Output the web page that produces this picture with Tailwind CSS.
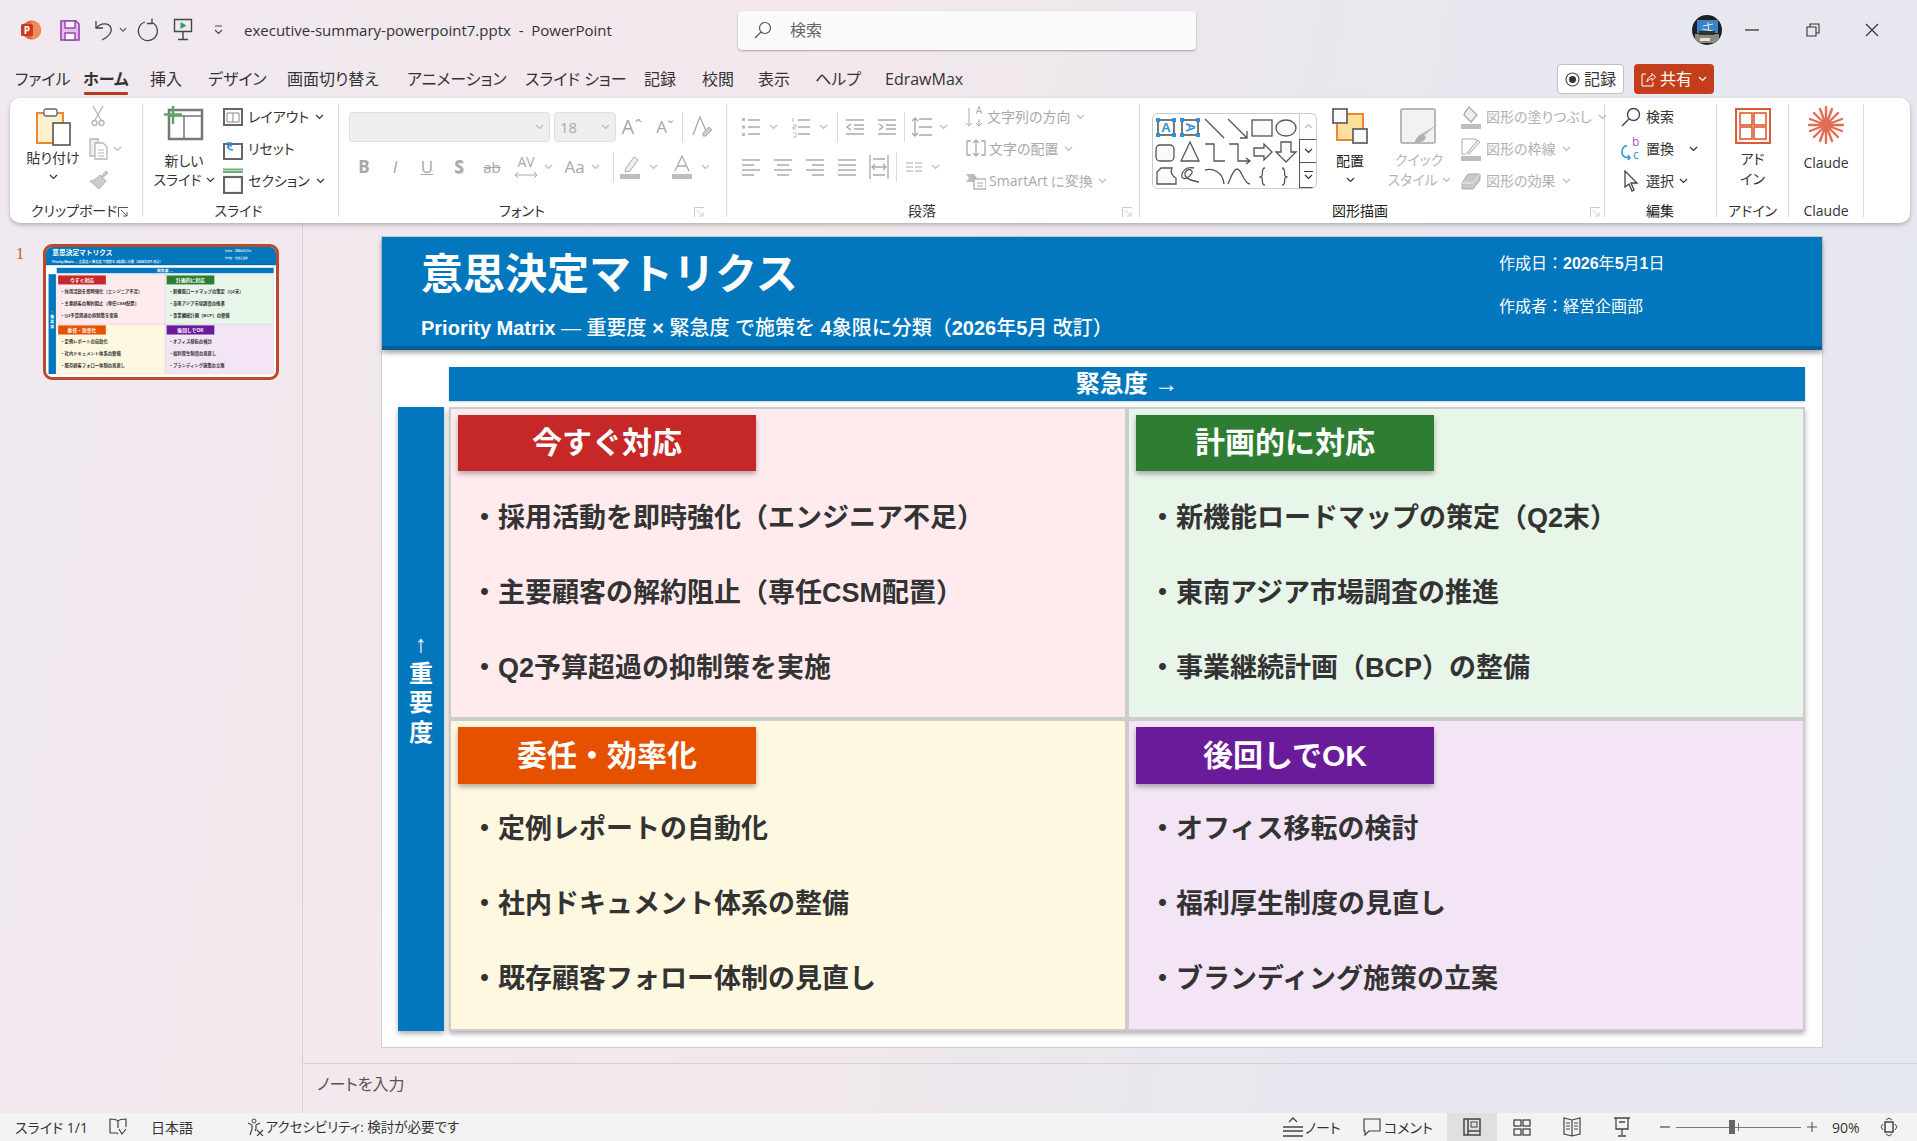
<!DOCTYPE html>
<html lang="ja">
<head>
<meta charset="utf-8">
<title>PowerPoint</title>
<script src="https://cdn.jsdelivr.net/npm/@tailwindcss/browser@4"></script>
</head>
<body class="m-0 overflow-hidden">
<svg class="hidden" aria-hidden="true">
<symbol id="chev" viewBox="0 0 9 6"><path d="M1 1l3.5 3.5L8 1" fill="none" stroke="currentColor" stroke-width="1.2"/></symbol>
<symbol id="launch" viewBox="0 0 11 11"><path d="M.5 10V.5H10M3 3l6 6M9 5v4H5" fill="none" stroke="currentColor"/></symbol>
</svg>
<div class="w-[1917px] h-[1141px] flex flex-col overflow-hidden text-[#333] font-['Open_Sans','Noto_Sans_CJK_JP',sans-serif] [font-feature-settings:'palt'] bg-[linear-gradient(100deg,#f0e9f0_0%,#f3e8ec_40%,#ece7ec_55%,#e7e8ef_70%,#e6e8ef_100%)]">

<!-- title bar -->
<header class="h-[60px] shrink-0 flex items-center">
  <div class="w-[70px] pl-[20px] shrink-0">
    <svg class="w-[21px] h-[22px]" viewBox="0 0 21 22"><circle cx="11.5" cy="11" r="9.5" fill="#e8623c"/><path d="M11.5 1.5a9.5 9.5 0 0 1 0 19z" fill="#f08a5d"/><rect x="1" y="5" width="12" height="12" rx="1.5" fill="#c43e1c"/><text x="7" y="15" font-size="10" font-weight="700" fill="#fff" text-anchor="middle" font-family="Open Sans">P</text></svg>
  </div>
  <svg class="w-[20px] h-[21px] shrink-0 ml-[-10px] mr-[14px]" viewBox="0 0 20 21"><path d="M1 1h15l3 3v16H1z" fill="#e4bdea" stroke="#9a3fb0" stroke-width="1.6"/><path d="M5 1h10v7H5zM5 13h10v7H5z" fill="#fff" stroke="#9a3fb0" stroke-width="1.4"/></svg>
  <svg class="w-[20px] h-[22px] shrink-0" viewBox="0 0 20 22"><path d="M2 2v7h7M2.500 9C6 4 15 3 17 9c1.500 5-3 9-9 12" fill="none" stroke="#444" stroke-width="1.3"/></svg>
  <svg class="w-[8px] h-[6px] ml-[5px] text-[#444] shrink-0"><use href="#chev"/></svg>
  <svg class="w-[22px] h-[24px] ml-[10px] shrink-0" viewBox="0 0 22 24"><path d="M8 4A9.500 9.500 0 1 0 15 4.500M15 .5v5h-5" fill="none" stroke="#444" stroke-width="1.300"/></svg>
  <svg class="w-[20px] h-[24px] ml-[14px] shrink-0" viewBox="0 0 20 24"><path d="M1.500 1.500h17v12h-17zM10 14v7M5 21.500h10" fill="none" stroke="#444" stroke-width="1.400"/><path d="M7.500 4l6 3.500-6 3.500z" fill="#2f9e6a"/></svg>
  <svg class="w-[11px] h-[11px] ml-[20px] shrink-0" viewBox="0 0 11 11"><path d="M2 1h7M2 5l3.500 3.500L9 5" fill="none" stroke="#444" stroke-width="1.100"/></svg>
  <div class="ml-[20px] text-[15px] whitespace-pre w-[488px] shrink-0">executive-summary-powerpoint7.pptx  -  PowerPoint</div>
  <div class="ml-[6px] w-[458px] h-[39px] shrink-0 bg-[#fafafa] rounded-[4px] shadow-[0_1px_2px_rgba(0,0,0,0.3)] flex items-center">
    <svg class="w-[18px] h-[18px] ml-[16px]" viewBox="0 0 18 18"><circle cx="11" cy="7" r="5.500" fill="none" stroke="#555" stroke-width="1.200"/><path d="M7 11l-6 6" stroke="#555" stroke-width="1.200"/></svg>
    <span class="ml-[18px] text-[16px] text-[#666]">検索</span>
  </div>
  <svg class="w-[30px] h-[30px] ml-[496px] shrink-0" viewBox="0 0 30 30"><defs><clipPath id="av"><circle cx="15" cy="15" r="15"/></clipPath></defs><g clip-path="url(#av)"><rect width="30" height="30" fill="#1c2125"/><rect x="5" y="5" width="21" height="13" fill="#3b83c8"/><path d="M16 7l1 12M11 11l10-2M10 14l11 2" stroke="#dfe9ee"/><rect x="3" y="19" width="24" height="9" fill="#8c8a7e"/><rect x="7" y="16" width="16" height="4" fill="#2a3a2c"/><rect x="8" y="23" width="10" height="3" fill="#e4e2da"/></g></svg>
  <svg class="w-[14px] h-[2px] ml-[23px] shrink-0" viewBox="0 0 14 2"><path d="M0 1h14" stroke="#333" stroke-width="1.300"/></svg>
  <svg class="w-[14px] h-[14px] ml-[47px] shrink-0" viewBox="0 0 14 14"><path d="M1 4h9v9H1zM4 4V1h9v9h-3" fill="none" stroke="#333" stroke-width="1.100"/></svg>
  <svg class="w-[14px] h-[14px] ml-[45px] shrink-0" viewBox="0 0 14 14"><path d="M1 1l12 12M13 1L1 13" stroke="#333" stroke-width="1.200"/></svg>
</header>

<!-- tabs -->
<nav class="h-[38px] shrink-0 flex text-[16px] text-[#333] relative">
  <span class="w-[83px] pl-[15px] pt-[7px] leading-[24px]">ファイル</span>
  <span class="w-[67px] pt-[7px] leading-[24px] font-bold border-b-0 relative">ホーム<span class="absolute left-[1px] top-[32px] w-[44px] h-[3px] rounded-[1px] bg-[#b83b1d]"></span></span>
  <span class="w-[58px] pt-[7px] leading-[24px]">挿入</span>
  <span class="w-[79px] pt-[7px] leading-[24px]">デザイン</span>
  <span class="w-[120px] pt-[7px] leading-[24px]">画面切り替え</span>
  <span class="w-[118px] pt-[7px] leading-[24px]">アニメーション</span>
  <span class="w-[119px] pt-[7px] leading-[24px]">スライド ショー</span>
  <span class="w-[58px] pt-[7px] leading-[24px]">記録</span>
  <span class="w-[56px] pt-[7px] leading-[24px]">校閲</span>
  <span class="w-[57px] pt-[7px] leading-[24px]">表示</span>
  <span class="w-[70px] pt-[7px] leading-[24px]">ヘルプ</span>
  <span class="w-[91px] pt-[7px] leading-[24px]">EdrawMax</span>
  <div class="w-[772px] flex justify-end items-start pt-[4px] shrink-0 ml-[-34px] text-[16px]">
    <div class="w-[67px] h-[30px] bg-white border border-[#c0c0c0] rounded-[4px] flex items-center justify-center gap-[4px]">
      <svg class="w-[15px] h-[15px]" viewBox="0 0 15 15"><circle cx="7.500" cy="7.500" r="6.500" fill="none" stroke="#444" stroke-width="1.100"/><circle cx="7.500" cy="7.500" r="3.500" fill="#333"/></svg><span>記録</span>
    </div>
    <div class="w-[80px] h-[30px] ml-[10px] bg-[#c43e1c] text-white rounded-[4px] flex items-center justify-center gap-[4px]">
      <svg class="w-[15px] h-[15px]" viewBox="0 0 15 15"><path d="M5 2H1v12h11v-4M6 10c0-4 3-6 5-6V1.500L14.500 5 11 8.500V6.500C9 6.500 7 8 6 10z" fill="none" stroke="#fff"/></svg><span>共有</span>
      <svg class="w-[9px] h-[6px] ml-[2px] text-white"><use href="#chev"/></svg>
    </div>
  </div>
</nav>

<!-- ribbon -->
<div class="ml-[10px] w-[1900px] h-[125px] shrink-0 bg-white rounded-[10px] shadow-[0_2px_4px_rgba(0,0,0,0.25)] flex pt-[6px] text-[14px] leading-[24px] relative z-10 whitespace-nowrap">

  <!-- clipboard -->
  <section class="w-[133px] h-[113px] shrink-0 border-r border-[#d9d9d9] relative">
    <div class="h-[97px] flex">
      <div class="w-[72px] ml-[7px] flex flex-col items-center">
        <svg class="w-[36px] h-[40px] mt-[3px] shrink-0" viewBox="0 0 36 40"><rect x="2" y="6" width="26" height="30" fill="#fdf0cf" stroke="#e8882c" stroke-width="2"/><rect x="9" y="2" width="13" height="7" rx="2" fill="#fff" stroke="#666" stroke-width="1.300"/><rect x="18" y="16" width="17" height="22" fill="#fff" stroke="#555" stroke-width="1.600"/></svg>
        <span class="mt-[1px] leading-[20px]">貼り付け</span>
        <svg class="w-[9px] h-[6px] mt-[6px] text-[#333]"><use href="#chev"/></svg>
      </div>
      <div class="w-[40px] flex flex-col gap-[8px] pt-[1px]">
        <div class="h-[24px] w-[18px] flex justify-center"><svg class="w-[14px] h-[22px]" viewBox="0 0 14 22"><path d="M2 1l8 14M12 1L4 15" stroke="#b5b5b5" stroke-width="1.300"/><circle cx="3.500" cy="18" r="2.500" fill="none" stroke="#b5b5b5" stroke-width="1.300"/><circle cx="10.500" cy="18" r="2.500" fill="none" stroke="#b5b5b5" stroke-width="1.300"/></svg></div>
        <div class="h-[24px] flex items-center"><svg class="w-[20px] h-[22px] shrink-0" viewBox="0 0 20 22"><path d="M1 1h8v17H1z" fill="#eee" stroke="#b5b5b5" stroke-width="1.300"/><path d="M6 5h8l4 4v12H6z" fill="#fff" stroke="#b5b5b5" stroke-width="1.300"/><path d="M9 12h6M9 15h6M9 18h6" stroke="#b5b5b5"/></svg><svg class="w-[9px] h-[6px] ml-[4px] text-[#bbb] shrink-0"><use href="#chev"/></svg></div>
        <div class="h-[24px] w-[20px] flex justify-center"><svg class="w-[20px] h-[22px]" viewBox="0 0 20 22"><path d="M13 7l4-5 2 2-5 4zM11 6l6 6-7 8-9-8c3 0 6-2 10-6z" fill="#ccc" stroke="#b0b0b0"/></svg></div>
      </div>
    </div>
    <div class="h-[20px] leading-[20px] flex"><span class="ml-[21px] w-[79px]">クリップボード</span><svg class="w-[11px] h-[11px] mt-[6px] ml-[8px] text-[#555]"><use href="#launch"/></svg></div>
  </section>

  <!-- slide -->
  <section class="w-[196px] h-[113px] shrink-0 border-r border-[#d9d9d9]">
    <div class="h-[97px] flex">
      <div class="w-[72px] ml-[5px] flex flex-col items-center">
        <svg class="w-[40px] h-[36px] mt-[2px] shrink-0" viewBox="0 0 40 36"><path d="M5 4h33v29H5z" fill="#fff" stroke="#777" stroke-width="2.500"/><path d="M5 10h33M20 10v23" stroke="#777" stroke-width="1.500"/><path d="M9 0v18M0 8.500h18" stroke="#58a868" stroke-width="2.500"/></svg>
        <span class="mt-[9px] leading-[19px]">新しい</span>
        <span class="flex items-center leading-[19px]">スライド<svg class="w-[9px] h-[6px] ml-[4px] text-[#333]"><use href="#chev"/></svg></span>
      </div>
      <div class="ml-[3px] flex flex-col gap-[8px] pt-[1px]">
        <div class="h-[24px] flex items-center"><svg class="w-[20px] h-[18px] shrink-0" viewBox="0 0 20 18"><rect x="1" y="1" width="18" height="16" fill="#fff" stroke="#666" stroke-width="2"/><path d="M4 5h12M10 5v9M4 5v9h12V5" fill="none" stroke="#888"/></svg><span class="ml-[5px]">レイアウト</span><svg class="w-[9px] h-[6px] ml-[6px] text-[#333]"><use href="#chev"/></svg></div>
        <div class="h-[24px] flex items-center"><svg class="w-[20px] h-[22px] shrink-0" viewBox="0 0 20 22"><rect x="1" y="6" width="18" height="15" fill="#fff" stroke="#666" stroke-width="2"/><path d="M4 10l4-5M4 5h4v4M5 7c0 3 2 5 5 5" fill="none" stroke="#2f8fd8" stroke-width="1.500"/></svg><span class="ml-[5px]">リセット</span></div>
        <div class="h-[24px] flex items-center"><svg class="w-[20px] h-[26px] shrink-0" viewBox="0 0 20 26"><path d="M0 1.500h20M0 4h20" stroke="#6fb07c" stroke-width="2"/><rect x="1" y="9" width="18" height="16" fill="#fff" stroke="#666" stroke-width="2.200"/></svg><span class="ml-[5px]">セクション</span><svg class="w-[9px] h-[6px] ml-[6px] text-[#333]"><use href="#chev"/></svg></div>
      </div>
    </div>
    <div class="h-[20px] leading-[20px] text-center pr-[4px]">スライド</div>
  </section>

  <!-- font -->
  <section class="w-[388px] h-[113px] shrink-0 border-r border-[#d9d9d9] relative">
    <div class="h-[97px] pl-[10px] pt-[8px] flex flex-col gap-[10px]">
      <div class="h-[30px] flex items-center">
        <div class="w-[201px] h-[30px] bg-[#efefef] border border-[#dedede] rounded-[4px] flex items-center justify-end pr-[5px] shrink-0"><svg class="w-[9px] h-[6px] text-[#bbb]"><use href="#chev"/></svg></div>
        <div class="w-[62px] h-[30px] ml-[4px] bg-[#efefef] border border-[#dedede] rounded-[4px] flex items-center justify-between px-[5px] text-[15px] text-[#aaa] shrink-0">18<svg class="w-[9px] h-[6px] text-[#bbb]"><use href="#chev"/></svg></div>
        <span class="w-[32px] text-center text-[20px] text-[#a8a8a8] shrink-0 leading-[30px]">Aˆ</span>
        <span class="w-[34px] text-center text-[17px] text-[#a8a8a8] shrink-0 leading-[30px]">Aˇ</span>
        <span class="w-px h-[30px] bg-[#d9d9d9] shrink-0"></span>
        <svg class="w-[22px] h-[24px] ml-[8px] shrink-0" viewBox="0 0 22 24"><path d="M2 20L9 2l6 14" fill="none" stroke="#aaa" stroke-width="1.300"/><path d="M12 18l6-6 3 3-6 6h-3z" fill="#ccc" stroke="#aaa"/></svg>
      </div>
      <div class="h-[30px] flex items-center text-[#a8a8a8] text-[17px]">
        <span class="w-[30px] text-center font-bold shrink-0">B</span>
        <span class="w-[32px] text-center italic shrink-0">I</span>
        <span class="w-[32px] text-center underline shrink-0">U</span>
        <span class="w-[32px] text-center font-bold [text-shadow:1px_1px_1px_#ccc] shrink-0">S</span>
        <span class="w-[34px] text-center line-through text-[15px] shrink-0">ab</span>
        <span class="w-[49px] flex items-center justify-center shrink-0"><svg class="w-[24px] h-[26px]" viewBox="0 0 24 26"><text x="12" y="13" font-size="14" text-anchor="middle" fill="#a8a8a8" font-family="Open Sans">AV</text><path d="M1 21h22M4 18l-3 3 3 3M20 18l3 3-3 3" fill="none" stroke="#a8a8a8"/></svg><svg class="w-[9px] h-[6px] ml-[6px] text-[#bbb]"><use href="#chev"/></svg></span>
        <span class="w-[48px] flex items-center justify-center shrink-0">Aa<svg class="w-[9px] h-[6px] ml-[6px] text-[#bbb]"><use href="#chev"/></svg></span>
        <span class="w-px h-[30px] bg-[#d9d9d9] ml-[7px] shrink-0"></span>
        <svg class="w-[20px] h-[24px] ml-[6px] shrink-0" viewBox="0 0 20 24"><path d="M6 13l8-11 4 3-8 11-5 1z" fill="#eee" stroke="#aaa"/><rect y="19" width="20" height="5" fill="#bdbdbd"/></svg>
        <svg class="w-[9px] h-[6px] ml-[9px] text-[#bbb] shrink-0"><use href="#chev"/></svg>
        <svg class="w-[20px] h-[24px] ml-[14px] shrink-0" viewBox="0 0 20 24"><path d="M3 16L10 1l7 15M5.500 11h9" fill="none" stroke="#aaa" stroke-width="1.300"/><rect y="19" width="20" height="5" fill="#bdbdbd"/></svg>
        <svg class="w-[9px] h-[6px] ml-[9px] text-[#bbb] shrink-0"><use href="#chev"/></svg>
      </div>
    </div>
    <div class="h-[20px] leading-[20px] flex"><span class="ml-[160px] w-[44px]">フォント</span><svg class="w-[11px] h-[11px] mt-[6px] ml-[151px] text-[#ccc]"><use href="#launch"/></svg></div>
  </section>

  <!-- paragraph -->
  <section class="w-[413px] h-[113px] shrink-0 border-r border-[#d9d9d9]">
    <div class="h-[97px] flex">
      <div class="w-[239px] pl-[15px] pt-[8px] flex flex-col gap-[10px] shrink-0">
        <div class="h-[30px] flex items-center">
          <svg class="w-[18px] h-[20px] shrink-0" viewBox="0 0 18 20"><path d="M6 3h12M6 10h12M6 17h12" stroke="#aaa" stroke-width="1.600"/><path d="M0 1h3v3H0zM0 8.500h3v3H0zM0 16h3v3H0z" fill="#bbb"/></svg>
          <svg class="w-[9px] h-[6px] ml-[9px] text-[#bbb] shrink-0"><use href="#chev"/></svg>
          <svg class="w-[18px] h-[22px] ml-[14px] shrink-0" viewBox="0 0 18 22"><path d="M6 4h12M6 11h12M6 18h12" stroke="#aaa" stroke-width="1.600"/><path d="M1 2v4M1 9h3v2H1v2h3M1 17h3v4H1" fill="none" stroke="#bbb"/></svg>
          <svg class="w-[9px] h-[6px] ml-[9px] text-[#bbb] shrink-0"><use href="#chev"/></svg>
          <span class="w-px h-[30px] bg-[#d9d9d9] ml-[9px] shrink-0"></span>
          <svg class="w-[18px] h-[18px] ml-[8px] shrink-0" viewBox="0 0 18 18"><path d="M0 2h18M8 7h10M8 11h10M0 16h18M5 6L1 9l4 3" fill="none" stroke="#aaa" stroke-width="1.400"/></svg>
          <svg class="w-[18px] h-[18px] ml-[14px] shrink-0" viewBox="0 0 18 18"><path d="M0 2h18M8 7h10M8 11h10M0 16h18M1 6l4 3-4 3" fill="none" stroke="#aaa" stroke-width="1.400"/></svg>
          <span class="w-px h-[30px] bg-[#d9d9d9] ml-[8px] shrink-0"></span>
          <svg class="w-[20px] h-[20px] ml-[7px] shrink-0" viewBox="0 0 20 20"><path d="M7 2h13M7 10h13M7 18h13M3 1v18M0 4l3-3 3 3M0 16l3 3 3-3" fill="none" stroke="#aaa" stroke-width="1.400"/></svg>
          <svg class="w-[9px] h-[6px] ml-[7px] text-[#bbb] shrink-0"><use href="#chev"/></svg>
        </div>
        <div class="h-[30px] flex items-center">
          <svg class="w-[18px] h-[18px] shrink-0" viewBox="0 0 18 18"><path d="M0 2h18M0 7h12M0 12h18M0 17h12" stroke="#aaa" stroke-width="1.400"/></svg>
          <svg class="w-[18px] h-[18px] ml-[14px] shrink-0" viewBox="0 0 18 18"><path d="M0 2h18M3 7h12M0 12h18M3 17h12" stroke="#aaa" stroke-width="1.400"/></svg>
          <svg class="w-[18px] h-[18px] ml-[14px] shrink-0" viewBox="0 0 18 18"><path d="M0 2h18M6 7h12M0 12h18M6 17h12" stroke="#aaa" stroke-width="1.400"/></svg>
          <svg class="w-[18px] h-[18px] ml-[14px] shrink-0" viewBox="0 0 18 18"><path d="M0 2h18M0 7h18M0 12h18M0 17h18" stroke="#aaa" stroke-width="1.400"/></svg>
          <svg class="w-[20px] h-[24px] ml-[13px] shrink-0" viewBox="0 0 20 24"><path d="M1 0v24M19 0v24M4 12h12M6 9l-3 3 3 3M14 9l3 3-3 3M4 4h12M4 20h12" fill="none" stroke="#aaa" stroke-width="1.300"/></svg>
          <span class="w-px h-[30px] bg-[#d9d9d9] ml-[7px] shrink-0"></span>
          <svg class="w-[16px] h-[12px] ml-[9px] shrink-0" viewBox="0 0 16 12"><path d="M0 2h7M9 2h7M0 6h7M9 6h7M0 10h7M9 10h7" stroke="#aaa"/></svg>
          <svg class="w-[9px] h-[6px] ml-[9px] text-[#bbb] shrink-0"><use href="#chev"/></svg>
        </div>
      </div>
      <div class="flex flex-col gap-[8px] pt-[1px] text-[#a8a8a8]">
        <div class="h-[24px] flex items-center"><svg class="w-[18px] h-[24px] shrink-0" viewBox="0 0 18 24"><path d="M3 3v18M0 18l3 3 3-3M13 14v7M10 18l3 3 3-3" fill="none" stroke="#aaa"/><text x="13" y="9" font-size="10" text-anchor="middle" fill="#aaa" font-family="Open Sans">A</text></svg><span class="ml-[3px]">文字列の方向</span><svg class="w-[9px] h-[6px] ml-[5px] text-[#bbb]"><use href="#chev"/></svg></div>
        <div class="h-[24px] flex items-center"><svg class="w-[20px] h-[20px] shrink-0" viewBox="0 0 20 20"><path d="M5 2H1v14h4M15 2h4v14h-4M10 1v16M7 4l3-3 3 3M7 14l3 3 3-3" fill="none" stroke="#aaa" stroke-width="1.300"/></svg><span class="ml-[3px]">文字の配置</span><svg class="w-[9px] h-[6px] ml-[5px] text-[#bbb]"><use href="#chev"/></svg></div>
        <div class="h-[24px] flex items-center"><svg class="w-[20px] h-[18px] shrink-0" viewBox="0 0 20 18"><path d="M0 2h8l3 4-3 4H0l3-4z" fill="#bbb"/><rect x="8" y="7" width="12" height="10" fill="#fff" stroke="#aaa" stroke-width="1.300"/><path d="M11 11h6M11 14h6" stroke="#aaa"/></svg><span class="ml-[3px] font-[Open_Sans]">SmartArt に変換</span><svg class="w-[9px] h-[6px] ml-[5px] text-[#bbb]"><use href="#chev"/></svg></div>
      </div>
    </div>
    <div class="h-[20px] leading-[20px] flex"><span class="ml-[181px] w-[28px]">段落</span><svg class="w-[11px] h-[11px] mt-[6px] ml-[186px] text-[#ccc]"><use href="#launch"/></svg></div>
  </section>

  <!-- drawing -->
  <section class="w-[465px] h-[113px] shrink-0 border-r border-[#d9d9d9]">
    <div class="h-[97px] flex">
      <div class="ml-[12px] mt-[9px] w-[165px] h-[76px] border border-[#ccc] rounded-[6px] flex shrink-0 overflow-hidden bg-[#fff]">
        <svg class="w-[146px] h-[76px] shrink-0" viewBox="0 0 146 76" fill="none" stroke="#555" stroke-width="1.300">
          <rect x="5" y="6" width="16" height="15" stroke-width="1.600"/><text x="13" y="18" font-size="13" font-weight="700" text-anchor="middle" fill="#2f8fd8" stroke="none" font-family="Liberation Sans">A</text>
          <g fill="#2f8fd8" stroke="none"><rect x="3" y="4" width="4" height="4"/><rect x="19" y="4" width="4" height="4"/><rect x="3" y="19" width="4" height="4"/><rect x="19" y="19" width="4" height="4"/></g>
          <rect x="29" y="6" width="16" height="15" stroke-width="1.600"/><text x="37" y="18" font-size="13" font-weight="700" text-anchor="middle" fill="#2f8fd8" stroke="none" font-family="Liberation Sans" transform="rotate(90 37 13.500)">A</text>
          <g fill="#2f8fd8" stroke="none"><rect x="27" y="4" width="4" height="4"/><rect x="43" y="4" width="4" height="4"/><rect x="27" y="19" width="4" height="4"/><rect x="43" y="19" width="4" height="4"/></g>
          <path d="M52 5l19 19M75 5l19 19m-7 0h7v-7"/>
          <rect x="99" y="6" width="20" height="16" fill="#fafafa"/>
          <ellipse cx="133" cy="14" rx="10" ry="8" fill="#fafafa"/>
          <rect x="3" y="31" width="18" height="16" rx="4" fill="#fafafa"/>
          <path d="M37 28l-9 19h18z" fill="#fafafa"/>
          <path d="M52 30h9v17h11M76 30h9v17h12m-4-3l4 3-4 3"/>
          <path d="M101 34h10v-4l8 8-8 8v-4h-10z" fill="#fafafa"/>
          <path d="M128 28h10v10h5l-10 10-10-10h5z" fill="#fafafa"/>
          <path d="M4 70V58l4-4h11c-2 4 0 8 4 10v6z" fill="#fafafa"/>
          <path d="M41 54c-8-2-13 4-12 9 2 4 8 0 10-4 1-4-5-5-7 0-1 6 8 8 14 9"/>
          <path d="M52 56c8-2 18 2 19 14M75 70c2-4 5-15 9-15 5 0 6 14 13 15"/>
          <path d="M112 54c-4 0-2 6-3 8l-2 1 2 1c1 2-1 7 3 7M129 54c4 0 2 6 3 8l2 1-2 1c-1 2 1 7-3 7"/>
        </svg>
        <div class="w-[18px] flex flex-col shrink-0">
          <div class="h-[25px] border-l border-[#ccc] flex items-center justify-center text-[#bbb]"><svg class="w-[9px] h-[6px] rotate-180"><use href="#chev"/></svg></div>
          <div class="h-[25px] border border-[#555] border-r-0 flex items-center justify-center text-[#333]"><svg class="w-[9px] h-[6px]"><use href="#chev"/></svg></div>
          <div class="h-[25px] border border-[#555] border-t-0 border-r-0 flex flex-col items-center justify-center text-[#333]"><span class="w-[9px] h-px bg-[#333] mb-[2px]"></span><svg class="w-[9px] h-[6px]"><use href="#chev"/></svg></div>
        </div>
      </div>
      <div class="w-[56px] ml-[5px] flex flex-col items-center shrink-0">
        <svg class="w-[36px] h-[36px] mt-[4px] shrink-0" viewBox="0 0 36 36"><rect x="5" y="6" width="26" height="26" fill="#fbdf9a" stroke="#e8882c" stroke-width="2"/><rect x="1" y="1" width="14" height="14" fill="#fafafa" stroke="#666" stroke-width="1.800"/><rect x="21" y="21" width="14" height="14" fill="#fafafa" stroke="#666" stroke-width="1.800"/></svg>
        <span class="mt-[7px] leading-[20px] text-[#222]">配置</span>
        <svg class="w-[9px] h-[6px] mt-[6px] text-[#333]"><use href="#chev"/></svg>
      </div>
      <div class="w-[72px] ml-[5px] flex flex-col items-center shrink-0 text-[#b5b5b5]">
        <svg class="w-[38px] h-[38px] mt-[4px] shrink-0" viewBox="0 0 38 38"><rect x="1" y="1" width="34" height="34" rx="2" fill="#f2f2f2" stroke="#b8b8b8" stroke-width="2"/><path d="M38 16L24 28l-3-2z" fill="#c2c2c2"/><path d="M23 26c-4 0-6 3-9 9 6 0 11-2 12-6z" fill="#b0b0b0"/></svg>
        <span class="mt-[4px] leading-[20px]">クイック</span>
        <span class="flex items-center leading-[19px]">スタイル<svg class="w-[9px] h-[6px] ml-[4px] text-[#bbb]"><use href="#chev"/></svg></span>
      </div>
      <div class="ml-[6px] flex flex-col gap-[8px] pt-[1px] text-[#b0b0b0] shrink-0">
        <div class="h-[24px] flex items-center"><svg class="w-[20px] h-[23px] shrink-0" viewBox="0 0 20 23"><path d="M8 1c-2 3-5 6-5 8l7 7 6-7z" fill="#eee" stroke="#aaa" stroke-width="1.300"/><rect y="18" width="20" height="5" fill="#bdbdbd"/></svg><span class="ml-[5px]">図形の塗りつぶし</span><svg class="w-[9px] h-[6px] ml-[6px] text-[#bbb]"><use href="#chev"/></svg></div>
        <div class="h-[24px] flex items-center"><svg class="w-[20px] h-[23px] shrink-0" viewBox="0 0 20 23"><path d="M1 16V1h14v2M1 16h4" fill="none" stroke="#aaa"/><path d="M6 15l11-13 2 2L8 16z" fill="#eee" stroke="#aaa"/><rect y="18" width="20" height="5" fill="#bdbdbd"/></svg><span class="ml-[5px]">図形の枠線</span><svg class="w-[9px] h-[6px] ml-[6px] text-[#bbb]"><use href="#chev"/></svg></div>
        <div class="h-[24px] flex items-center"><svg class="w-[20px] h-[20px] shrink-0" viewBox="0 0 20 20"><path d="M1 12l6-9h12v6l-7 9H1z" fill="#c8c8c8" stroke="#aaa"/><path d="M1 12h11l7-9" fill="none" stroke="#eee"/></svg><span class="ml-[5px]">図形の効果</span><svg class="w-[9px] h-[6px] ml-[6px] text-[#bbb]"><use href="#chev"/></svg></div>
      </div>
    </div>
    <div class="h-[20px] leading-[20px] flex"><span class="ml-[192px] w-[60px] text-[#222]">図形描画</span><svg class="w-[11px] h-[11px] mt-[6px] ml-[198px] text-[#ccc]"><use href="#launch"/></svg></div>
  </section>

  <!-- edit -->
  <section class="w-[112px] h-[113px] shrink-0 border-r border-[#d9d9d9]">
    <div class="h-[97px] pl-[16px] flex flex-col gap-[8px] pt-[1px]">
      <div class="h-[24px] flex items-center"><svg class="w-[20px] h-[20px] shrink-0" viewBox="0 0 20 20"><circle cx="12.500" cy="7.500" r="6" fill="none" stroke="#444" stroke-width="1.400"/><path d="M8 12l-7 7" stroke="#444" stroke-width="1.400"/></svg><span class="ml-[5px]">検索</span></div>
      <div class="h-[24px] flex items-center"><svg class="w-[20px] h-[24px] shrink-0" viewBox="0 0 20 24"><path d="M6 9H4C0 12 0 18 4 20l5 1M7 18l2 3-2 2" fill="none" stroke="#2f8fd8" stroke-width="1.500"/><text x="11" y="9" font-size="12" fill="#a35ab8" font-family="Open Sans">b</text><text x="12" y="22" font-size="12" fill="#2f8fd8" font-family="Open Sans">c</text></svg><span class="ml-[5px]">置換</span><svg class="w-[9px] h-[6px] ml-[15px] text-[#333]"><use href="#chev"/></svg></div>
      <div class="h-[24px] flex items-center"><svg class="w-[20px] h-[22px] shrink-0" viewBox="0 0 20 22"><path d="M4 1v16l4-3 3 7 2-1-3-7h6z" fill="#fff" stroke="#444" stroke-width="1.300"/></svg><span class="ml-[5px]">選択</span><svg class="w-[9px] h-[6px] ml-[5px] text-[#333]"><use href="#chev"/></svg></div>
    </div>
    <div class="h-[20px] leading-[20px] text-center pr-[1px] text-[#222]">編集</div>
  </section>

  <!-- addin -->
  <section class="w-[72px] h-[113px] shrink-0 border-r border-[#d9d9d9]">
    <div class="h-[97px] flex flex-col items-center">
      <svg class="w-[36px] h-[36px] mt-[4px] shrink-0" viewBox="0 0 36 36" fill="none" stroke="#dc5a34" stroke-width="1.600"><rect x="1" y="1" width="34" height="34" stroke-width="2"/><rect x="5" y="5" width="12" height="12"/><rect x="19" y="5" width="12" height="12"/><rect x="5" y="19" width="12" height="12"/><rect x="19" y="19" width="12" height="12"/></svg>
      <span class="mt-[5px] leading-[20px]">アド</span>
      <span class="leading-[19px]">イン</span>
    </div>
    <div class="h-[20px] leading-[20px] text-center">アドイン</div>
  </section>

  <!-- claude -->
  <section class="w-[75px] h-[113px] shrink-0 border-r border-[#d9d9d9]">
    <div class="h-[97px] flex flex-col items-center">
      <svg class="w-[36px] h-[38px] mt-[2px] shrink-0" viewBox="-18 -19 36 38" stroke="#e26d52" stroke-width="2.400" stroke-linecap="round"><path d="M0-18V18M-17 0H17M-12-12L12 12M12-12L-12 12M-6-16L6 16M6-16L-6 16M-16-6L16 6M16-6L-16 6"/></svg>
      <span class="mt-[9px] leading-[20px] font-['Open_Sans']">Claude</span>
    </div>
    <div class="h-[20px] leading-[20px] text-center">Claude</div>
  </section>
  <div class="flex-1 h-[113px] flex items-end justify-center pb-[1px]"><svg class="w-[12px] h-[7px] ml-[-3px] text-[#333]"><use href="#chev" class="rotate-180"/></svg></div>
</div>

<!-- work area -->
<main class="flex-1 flex min-h-0">
  <aside class="w-[303px] shrink-0 border-r border-[#d6d2d4] flex pt-[21px]">
    <span class="w-[43px] pl-[16px] text-[16px] leading-[20px] text-[#c5573a] font-['Liberation_Serif',serif]">1</span>
    <div class="w-[236px] h-[136px] border-[3px] border-[#b94a2c] rounded-[9px] overflow-hidden bg-white shrink-0">
      <div class="w-[1440px] h-[810px] scale-[0.16] origin-top-left [font-feature-settings:normal] font-['Liberation_Sans','Noto_Sans_CJK_JP',sans-serif]">
        <div class="h-[113px] bg-[#0277bd] border-b-4 border-[#01609c] text-white flex justify-between">
          <div class="pl-[39px] pt-[13px]"><div class="text-[42px] leading-[50px] font-bold">意思決定マトリクス</div><div class="mt-[14px] text-[20px] leading-[28px] font-medium"><b>Priority Matrix</b> — 重要度 <b>×</b> 緊急度 で施策を <b>4</b>象限に分類（<b>2026</b>年<b>5</b>月 改訂）</div></div>
          <div class="w-[323px] pt-[15px] text-[16px] leading-[24px]"><div>作成日：<b>2026</b>年<b>5</b>月<b>1</b>日</div><div class="mt-[19px]">作成者：経営企画部</div></div>
        </div>
        <div class="ml-[67px] mr-[17px] mt-[17px] h-[34px] bg-[#0277bd] text-white text-center text-[24px] leading-[34px] font-bold">緊急度 <span class="font-normal">→</span></div>
        <div class="mt-[6px] ml-[16px] flex gap-[5px]">
          <div class="w-[46px] h-[624px] bg-[#0277bd] text-white text-[24px] leading-[29.5px] font-bold flex flex-col items-center justify-center pb-[62px]"><span class="font-normal">↑</span><span>重</span><span>要</span><span>度</span></div>
          <div class="w-[1356px] h-[624px] grid grid-cols-2 grid-rows-2 text-[27px] font-bold text-[#333]">
            <div class="bg-[#ffebee] border-2 border-[#ccc] pl-[7px] pt-[6px]"><div class="w-[298px] h-[56px] bg-[#c62828] text-white text-[30px] leading-[56px] text-center">今すぐ対応</div><div class="mt-[10px]"><div class="h-[75px] leading-[75px] pl-[13px]">・採用活動を即時強化（エンジニア不足）</div><div class="h-[75px] leading-[75px] pl-[13px]">・主要顧客の解約阻止（専任CSM配置）</div><div class="h-[75px] leading-[75px] pl-[13px]">・Q2予算超過の抑制策を実施</div></div></div>
            <div class="bg-[#e8f5e9] border-2 border-[#ccc] pl-[7px] pt-[6px]"><div class="w-[298px] h-[56px] bg-[#2e7d32] text-white text-[30px] leading-[56px] text-center">計画的に対応</div><div class="mt-[10px]"><div class="h-[75px] leading-[75px] pl-[13px]">・新機能ロードマップの策定（Q2末）</div><div class="h-[75px] leading-[75px] pl-[13px]">・東南アジア市場調査の推進</div><div class="h-[75px] leading-[75px] pl-[13px]">・事業継続計画（BCP）の整備</div></div></div>
            <div class="bg-[#fff8e1] border-2 border-[#ccc] pl-[7px] pt-[6px]"><div class="w-[298px] h-[57px] bg-[#e65100] text-white text-[30px] leading-[57px] text-center">委任・効率化</div><div class="mt-[8px]"><div class="h-[75px] leading-[75px] pl-[13px]">・定例レポートの自動化</div><div class="h-[75px] leading-[75px] pl-[13px]">・社内ドキュメント体系の整備</div><div class="h-[75px] leading-[75px] pl-[13px]">・既存顧客フォロー体制の見直し</div></div></div>
            <div class="bg-[#f3e5f5] border-2 border-[#ccc] pl-[7px] pt-[6px]"><div class="w-[298px] h-[57px] bg-[#6a1b9a] text-white text-[30px] leading-[57px] text-center">後回しでOK</div><div class="mt-[8px]"><div class="h-[75px] leading-[75px] pl-[13px]">・オフィス移転の検討</div><div class="h-[75px] leading-[75px] pl-[13px]">・福利厚生制度の見直し</div><div class="h-[75px] leading-[75px] pl-[13px]">・ブランディング施策の立案</div></div></div>
          </div>
        </div>
      </div>
    </div>
  </aside>
  <div class="flex-1 flex flex-col min-w-0">
    <div class="h-[840px] shrink-0 pt-[14px] pl-[79px]">
      <div class="w-[1440px] h-[810px] bg-white shadow-[0_0_0_1px_#cfcfcf] [font-feature-settings:normal] font-['Liberation_Sans','Noto_Sans_CJK_JP',sans-serif]">
        <div class="h-[113px] bg-[#0277bd] border-b-4 border-[#01609c] text-white flex justify-between shadow-[0_3px_5px_rgba(0,0,0,0.35)]">
          <div class="pl-[39px] pt-[13px]"><div class="text-[42px] leading-[50px] font-bold">意思決定マトリクス</div><div class="mt-[14px] text-[20px] leading-[28px] font-medium"><b>Priority Matrix</b> — 重要度 <b>×</b> 緊急度 で施策を <b>4</b>象限に分類（<b>2026</b>年<b>5</b>月 改訂）</div></div>
          <div class="w-[323px] pt-[15px] text-[16px] leading-[24px]"><div>作成日：<b>2026</b>年<b>5</b>月<b>1</b>日</div><div class="mt-[19px]">作成者：経営企画部</div></div>
        </div>
        <div class="ml-[67px] mr-[17px] mt-[17px] h-[34px] bg-[#0277bd] text-white text-center text-[24px] leading-[34px] font-bold shadow-[0_1px_2px_rgba(0,0,0,0.2)]">緊急度 <span class="font-normal">→</span></div>
        <div class="mt-[6px] ml-[16px] flex gap-[5px]">
          <div class="w-[46px] h-[624px] bg-[#0277bd] text-white text-[24px] leading-[29.5px] font-bold flex flex-col items-center justify-center pb-[62px] shadow-[0_3px_5px_rgba(0,0,0,0.3)]"><span class="font-normal">↑</span><span>重</span><span>要</span><span>度</span></div>
          <div class="w-[1356px] h-[624px] grid grid-cols-2 grid-rows-2 text-[27px] font-bold text-[#333] shadow-[0_3px_5px_rgba(0,0,0,0.3)]">
            <div class="bg-[#ffebee] border-2 border-[#ccc] pl-[7px] pt-[6px]"><div class="w-[298px] h-[56px] bg-[#c62828] text-white text-[30px] leading-[56px] text-center shadow-[0_3px_5px_rgba(0,0,0,0.3)]">今すぐ対応</div><div class="mt-[10px]"><div class="h-[75px] leading-[75px] pl-[13px]">・採用活動を即時強化（エンジニア不足）</div><div class="h-[75px] leading-[75px] pl-[13px]">・主要顧客の解約阻止（専任CSM配置）</div><div class="h-[75px] leading-[75px] pl-[13px]">・Q2予算超過の抑制策を実施</div></div></div>
            <div class="bg-[#e8f5e9] border-2 border-[#ccc] pl-[7px] pt-[6px]"><div class="w-[298px] h-[56px] bg-[#2e7d32] text-white text-[30px] leading-[56px] text-center shadow-[0_3px_5px_rgba(0,0,0,0.3)]">計画的に対応</div><div class="mt-[10px]"><div class="h-[75px] leading-[75px] pl-[13px]">・新機能ロードマップの策定（Q2末）</div><div class="h-[75px] leading-[75px] pl-[13px]">・東南アジア市場調査の推進</div><div class="h-[75px] leading-[75px] pl-[13px]">・事業継続計画（BCP）の整備</div></div></div>
            <div class="bg-[#fff8e1] border-2 border-[#ccc] pl-[7px] pt-[6px]"><div class="w-[298px] h-[57px] bg-[#e65100] text-white text-[30px] leading-[57px] text-center shadow-[0_3px_5px_rgba(0,0,0,0.3)]">委任・効率化</div><div class="mt-[8px]"><div class="h-[75px] leading-[75px] pl-[13px]">・定例レポートの自動化</div><div class="h-[75px] leading-[75px] pl-[13px]">・社内ドキュメント体系の整備</div><div class="h-[75px] leading-[75px] pl-[13px]">・既存顧客フォロー体制の見直し</div></div></div>
            <div class="bg-[#f3e5f5] border-2 border-[#ccc] pl-[7px] pt-[6px]"><div class="w-[298px] h-[57px] bg-[#6a1b9a] text-white text-[30px] leading-[57px] text-center shadow-[0_3px_5px_rgba(0,0,0,0.3)]">後回しでOK</div><div class="mt-[8px]"><div class="h-[75px] leading-[75px] pl-[13px]">・オフィス移転の検討</div><div class="h-[75px] leading-[75px] pl-[13px]">・福利厚生制度の見直し</div><div class="h-[75px] leading-[75px] pl-[13px]">・ブランディング施策の立案</div></div></div>
          </div>
        </div>
      </div>
    </div>
    <div class="flex-1 border-t border-[#d6d2d4] pl-[14px] pt-[8px] text-[16px] leading-[24px] text-[#555]">ノートを入力</div>
  </div>
</main>

<!-- status bar -->
<footer class="h-[28px] shrink-0 bg-[#f3f3f3] flex items-center text-[14px] text-[#333] whitespace-nowrap">
  <span class="ml-[15px] w-[94px]">スライド 1/1</span>
  <svg class="w-[18px] h-[18px] shrink-0" viewBox="0 0 18 18"><path d="M9 3C7 1 4 1 1 1v14h7l1 1M9 3c2-2 5-2 8-2v8M9 3v7" fill="none" stroke="#444" stroke-width="1.200"/><path d="M10 11l3 5 4-5" fill="none" stroke="#444" stroke-width="1.200"/></svg>
  <span class="ml-[24px] w-[96px]">日本語</span>
  <svg class="w-[18px] h-[18px] shrink-0" viewBox="0 0 18 18"><circle cx="7" cy="3" r="2" fill="none" stroke="#444"/><path d="M1 5l4 2v4l-2 6M13 5L9 7v4l-1 2M10 12l6 6M16 12l-6 6" fill="none" stroke="#444" stroke-width="1.200"/></svg>
  <span class="ml-[-3px] w-[1037px] pl-[0px] text-[13.500px]">&nbsp;アクセシビリティ: 検討が必要です</span>
  <svg class="w-[20px] h-[20px] shrink-0 ml-[-16px]" viewBox="0 0 20 20"><path d="M0 10h20M0 14h20M0 19h20M6 5l4-4 4 4" fill="none" stroke="#444" stroke-width="1.300"/></svg>
  <span class="ml-[2px] w-[49px]">ノート</span>
  <svg class="w-[18px] h-[18px] shrink-0 ml-[9px]" viewBox="0 0 18 18"><path d="M1 1h16v12H6l-4 4v-4H1z" fill="none" stroke="#444" stroke-width="1.200"/></svg>
  <span class="ml-[3px] w-[62px]">コメント</span>
  <span class="ml-[1px] w-[50px] h-[28px] bg-[#e0e0e0] flex items-center justify-center shrink-0"><svg class="w-[18px] h-[18px]" viewBox="0 0 18 18"><path d="M1 1h16v16H1zM5 1v16M5 13h12" fill="none" stroke="#444" stroke-width="1.500"/><rect x="8" y="4" width="6" height="5" fill="none" stroke="#444"/></svg></span>
  <span class="w-[50px] flex justify-center shrink-0"><svg class="w-[18px] h-[18px]" viewBox="0 0 18 18" fill="none" stroke="#444" stroke-width="1.300"><rect x="1" y="2" width="7" height="6"/><rect x="10" y="2" width="7" height="6"/><rect x="1" y="11" width="7" height="6"/><rect x="10" y="11" width="7" height="6"/></svg></span>
  <span class="w-[50px] flex justify-center shrink-0"><svg class="w-[18px] h-[20px]" viewBox="0 0 18 20" fill="none" stroke="#444" stroke-width="1.200"><path d="M9 3L1 1v16l8 2 8-2V1zM9 3v16M3 6h4M3 9h4M3 12h4M11 6h4M11 9h4M11 12h4"/></svg></span>
  <span class="w-[49px] flex justify-center shrink-0"><svg class="w-[18px] h-[20px]" viewBox="0 0 18 20" fill="none" stroke="#444" stroke-width="1.300"><path d="M1 1h16M3 1v11h12V1M9 12v6M5 19h8M6 5h6"/></svg></span>
  <svg class="w-[10px] h-[2px] ml-[14px] shrink-0" viewBox="0 0 10 2"><path d="M0 1h10" stroke="#555" stroke-width="1.300"/></svg>
  <div class="ml-[6px] w-[125px] h-[14px] shrink-0 relative bg-[linear-gradient(#777,#777)] bg-no-repeat bg-center bg-[length:100%_1px]"><span class="absolute left-[53px] top-0 w-[6px] h-[14px] bg-[#666]"></span><span class="absolute left-[62px] top-[3px] w-px h-[8px] bg-[#777]"></span></div>
  <svg class="w-[10px] h-[10px] ml-[6px] shrink-0" viewBox="0 0 10 10"><path d="M0 5h10M5 0v10" stroke="#555" stroke-width="1.100"/></svg>
  <span class="ml-[15px] w-[38px] font-['Open_Sans']">90%</span>
  <svg class="w-[18px] h-[20px] ml-[10px] shrink-0" viewBox="0 0 18 20" fill="none" stroke="#444"><rect x="5" y="5" width="8" height="10" stroke-width="1.500"/><path d="M6 3l3-2 3 2M6 17l3 2 3-2M3 7l-2 3 2 3M15 7l2 3-2 3"/></svg>
</footer>

</div>
</body>
</html>
